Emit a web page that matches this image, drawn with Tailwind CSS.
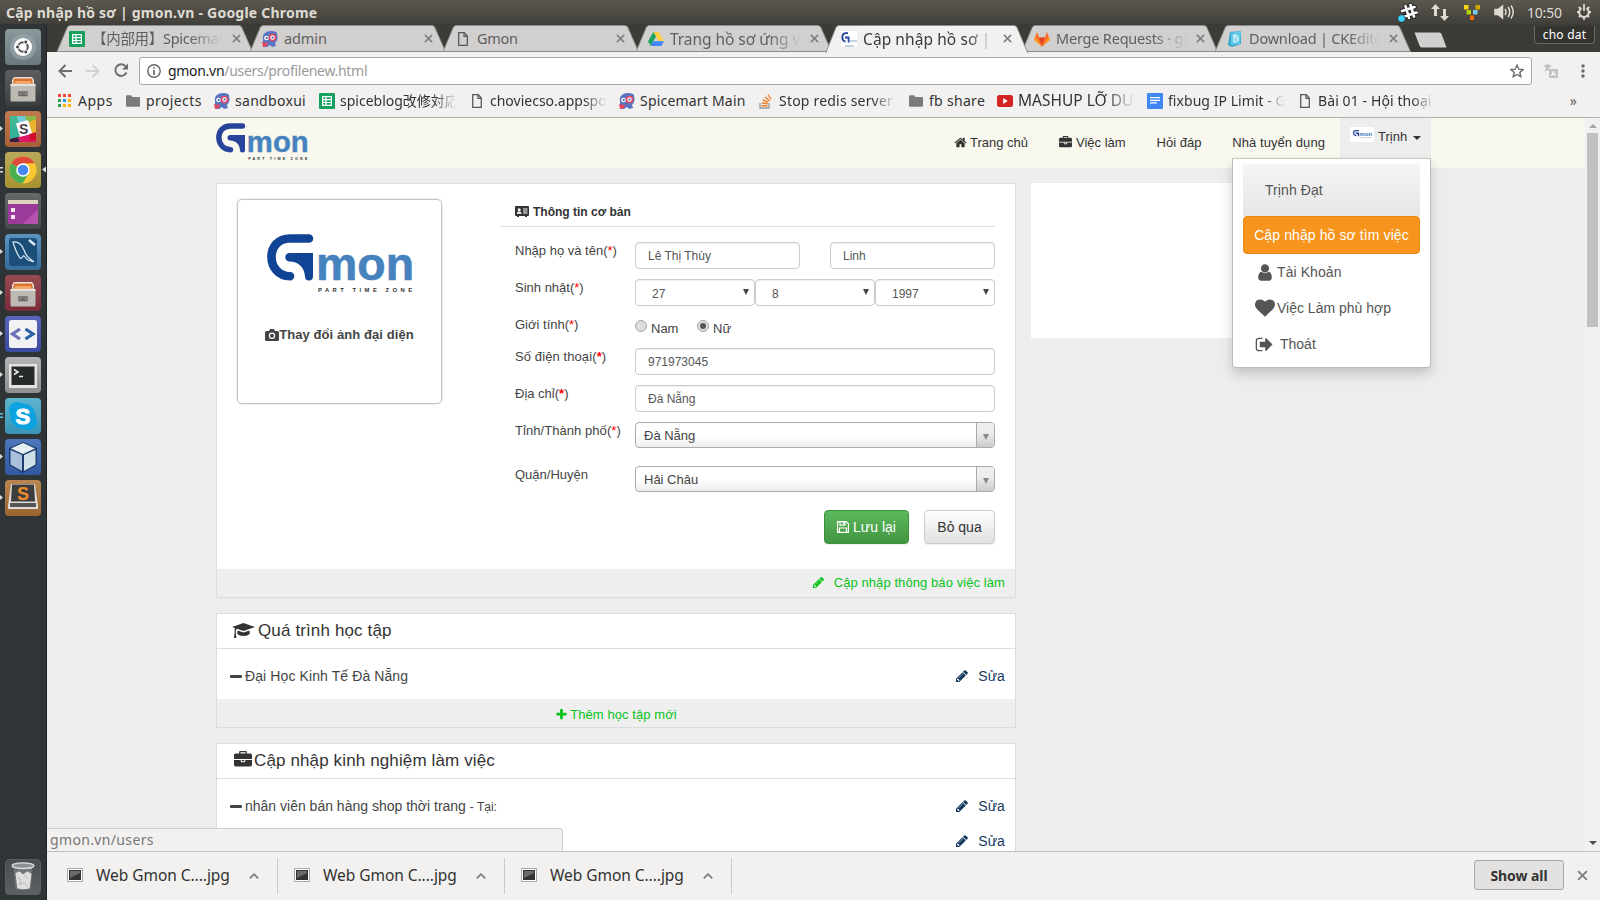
<!DOCTYPE html>
<html lang="vi">
<head>
<meta charset="utf-8">
<title>Cập nhập hồ sơ | gmon.vn</title>
<script src="https://cdn.jsdelivr.net/npm/@tailwindcss/browser@4"></script>
</head>
<body class="w-[1600px] h-[900px] overflow-hidden bg-[#ededed] font-['Liberation_Sans',Arial,sans-serif] text-[13px] text-[#444]">

<svg class="hidden">
  <symbol id="home" viewBox="0 0 1792 1792"><path d="M1472 992v480q0 26-19 45t-45 19h-384v-384h-256v384h-384q-26 0-45-19t-19-45v-480q0-1 .5-3t.5-3l575-474 575 474q1 2 1 6zm223-69l-62 74q-8 9-21 11h-3q-13 0-21-7l-692-577-692 577q-12 8-24 7-13-2-21-11l-62-74q-8-10-7-23.500t11-21.500l719-599q32-26 76-26t76 26l244 204v-195q0-14 9-23t23-9h192q14 0 23 9t9 23v408l219 182q10 8 11 21.500t-7 23.500z"/></symbol>
  <symbol id="briefcase" viewBox="0 0 1792 1792"><path d="M640 256h512v-128h-512v128zm1152 640v480q0 66-47 113t-113 47h-1472q-66 0-113-47t-47-113v-480h672v160q0 26 19 45t45 19h320q26 0 45-19t19-45v-160h672zm-768 0v128h-256v-128h256zm768-480v384h-1792v-384q0-66 47-113t113-47h352v-160q0-40 28-68t68-28h576q40 0 68 28t28 68v160h352q66 0 113 47t47 113z"/></symbol>
  <symbol id="user" viewBox="0 0 1792 1792"><path d="M1536 1399q0 109-62.500 187t-150.500 78h-854q-88 0-150.500-78t-62.500-187q0-85 8.500-160.500t31.500-152 58.500-131 94-89 134.500-34.500q131 128 313 128t313-128q76 0 134.500 34.500t94 89 58.500 131 31.500 152 8.500 160.500zm-256-887q0 159-112.500 271.500t-271.500 112.500-271.500-112.500-112.500-271.500 112.500-271.500 271.500-112.500 271.500 112.500 112.500 271.500z"/></symbol>
  <symbol id="heart" viewBox="0 0 1792 1792"><path d="M896 1664q-26 0-44-18l-624-602q-10-8-27.500-26t-55.500-65.500-68-97.500-53.500-121-23.500-138q0-220 127-344t351-124q62 0 126.500 21.500t120 58 95.500 68.500 76 68q36-36 76-68t95.500-68.500 120-58 126.500-21.500q224 0 351 124t127 344q0 221-229 450l-623 600q-18 18-44 18z"/></symbol>
  <symbol id="signout" viewBox="0 0 1792 1792"><path d="M704 1440q0 4 1 20t.5 26.500-3 23.500-10 19.500-20.500 6.500h-320q-119 0-203.500-84.500t-84.500-203.500v-704q0-119 84.500-203.500t203.500-84.500h320q13 0 22.500 9.500t9.500 22.500q0 4 1 20t.5 26.500-3 23.500-10 19.500-20.500 6.500h-320q-66 0-113 47t-47 113v704q0 66 47 113t113 47h312l11.500 1 11.500 3 8 5.500 7 9 2 13.500zm928-544q0 26-19 45l-544 544q-19 19-45 19t-45-19-19-45v-288h-448q-26 0-45-19t-19-45v-384q0-26 19-45t45-19h448v-288q0-26 19-45t45-19 45 19l544 544q19 19 19 45z"/></symbol>
  <symbol id="pencil" viewBox="0 0 1792 1792"><path d="M491 1536l91-91-235-235-91 91v107h128v128h107zm523-928q0-22-22-22-10 0-17 7l-542 542q-7 7-7 17 0 22 22 22 10 0 17-7l542-542q7-7 7-17zm-54-192l416 416-832 832h-416v-416zm683 96q0 53-37 90l-166 166-416-416 166-165q36-38 90-38 53 0 91 38l235 234q37 39 37 91z"/></symbol>
  <symbol id="plus" viewBox="0 0 1792 1792"><path d="M1600 736v192q0 40-28 68t-68 28h-416v416q0 40-28 68t-68 28h-192q-40 0-68-28t-28-68v-416h-416q-40 0-68-28t-28-68v-192q0-40 28-68t68-28h416v-416q0-40 28-68t68-28h192q40 0 68 28t28 68v416h416q40 0 68 28t28 68z"/></symbol>
  <symbol id="logo" viewBox="0 0 146 60">
    <path d="M42 4.500H23C11 4.500 4.500 13 4.500 23s7 19 18.500 19.200" fill="none" stroke="currentColor" stroke-width="8.600" stroke-linecap="round"/>
    <path d="M22.500 19H46v23.500a4 4 0 0 1-8 0C37.500 33 31 27.500 22.500 27.500a4.200 4.200 0 0 1 0-8.500z" fill="currentColor"/>
    <text x="49" y="45.700" font-family="Liberation Sans" font-weight="bold" font-size="46" textLength="98" lengthAdjust="spacingAndGlyphs" fill="#4682be" stroke="#4682be" stroke-width=".6">mon</text>
    <text x="51" y="57.800" font-family="Liberation Sans" font-weight="bold" font-size="5.800" textLength="94" fill="#333">PART TIME ZONE</text>
  </symbol>
  <symbol id="cabinet" viewBox="0 0 36 36">
    <path d="M7 10 9 7h18l2 3v5H7z" fill="#e9e5dd"/><path d="M9 8.500h18l1 5H8z" fill="#d9702c"/><path d="M10 11h16v3H10z" fill="#f2a66a"/>
    <path d="M5.500 14h25v16.500a1 1 0 0 1-1 1h-23a1 1 0 0 1-1-1z" fill="#bdbab4"/><path d="M5.500 14h25v2h-25z" fill="#e4e2de"/>
    <path d="M14 22h8v3.500h-8z" fill="none" stroke="#666" stroke-width="1.300"/><path d="M15.500 24h5" stroke="#444" stroke-width="1.200"/>
  </symbol>
  <symbol id="sheet" viewBox="0 0 16 16"><rect width="16" height="16" rx="1" fill="#16a05d"/><path d="M3 3h10v10H3z" fill="#fff"/><path d="M4.300 4.300h2v1.800h-2zM7.600 4.300h4.200v1.800H7.600zM4.300 7.200h2v1.700h-2zM7.600 7.200h4.200v1.700H7.600zM4.300 10h2v1.800h-2zM7.600 10h4.200v1.800H7.600z" fill="#16a05d"/></symbol>
  <symbol id="mascot" viewBox="0 0 16 16"><path d="M1 8C0 3 4 0 9 0c3 0 7 1 6 3 1 3 1 6-2 9l1 3-4 1-2-2-3 2-4 0z" fill="#5874c0"/><circle cx="4.500" cy="7" r="2.300" fill="#fff"/><circle cx="10.500" cy="6.500" r="3" fill="#fff" stroke="#e8455f" stroke-width="1.600"/><circle cx="10.500" cy="6.500" r="1" fill="#3b4f9a"/><circle cx="4.700" cy="7" r="1" fill="#3b4f9a"/><path d="M0 11l3 1 3-1-1 4-4 1z" fill="#e8455f"/></symbol>
  <symbol id="page" viewBox="0 0 12 16"><path d="M1.700 1.700h5.600l3 3.300v9.300H1.700z" fill="none" stroke="#5a5a5a" stroke-width="1.300"/><path d="M7 1.500v3.800h3.500" fill="none" stroke="#5a5a5a" stroke-width="1.300"/></symbol>
  <symbol id="folder" viewBox="0 0 14 12"><path d="M0 1.500Q0 .3 1 .3h4l1.500 1.700H13q1 0 1 1v7.700q0 1-1 1H1q-1 0-1-1z" fill="#7b7b7b"/></symbol>
  <symbol id="x" viewBox="0 0 10 10"><path d="M1 1l8 8M9 1L1 9" stroke="#7e7e7e" stroke-width="1.700"/></symbol>
  <symbol id="thumb" viewBox="0 0 16 14"><path d="M.5.5h15v13H.5z" fill="#fff" stroke="#a8a8a8"/><path d="M2 2h12v10H2z" fill="#333"/><path d="M3 3h10v2L3 10z" fill="#6a6a6a"/></symbol>
  <symbol id="chev" viewBox="0 0 10 6"><path d="M.8 5.300 5 1.200l4.200 4.100" fill="none" stroke="#7a7a7a" stroke-width="1.700"/></symbol>
  <symbol id="tab" viewBox="0 0 206 28"><path d="M.5 27.500 11 2.500Q12 .5 14 .5h175q2 0 3 2l11 25z"/></symbol>
</svg>

<!-- system panel -->
<div class="h-6 bg-linear-to-b from-[#5b584e] to-[#403f3a] flex items-center pl-1.5 pr-2 text-[#dfdbd2] font-['Noto_Sans','Open_Sans',sans-serif]">
  <div class="font-bold text-[14px] tracking-[0.22px] whitespace-nowrap">Cập nhập hồ sơ | gmon.vn - Google Chrome</div>
  <div class="ml-auto flex items-center">
    <svg class="w-[21px] h-[21px]" viewBox="0 0 21 21"><g stroke="#222" stroke-width="4.500" stroke-linecap="round"><path d="M8.500 4l3.500 12M13.500 3l3.500 11.500M5 9l12.500-4M7 14.500l12.500-4"/></g><g stroke="#fff" stroke-width="2.600" stroke-linecap="round"><path d="M8.500 4l3.500 12M13.500 3l3.500 11.500M5 9l12.500-4M7 14.500l12.500-4"/></g><circle cx="4.500" cy="16.500" r="3.800" fill="#3fd0f5" stroke="#222" stroke-width=".6"/></svg>
    <svg class="ml-[13px] w-[18px] h-[17px]" viewBox="0 0 18 17" fill="#dfdbd2"><path d="M4.500 0 9 5H6v7H3V5H0zM13.500 17 9 12h3V5h3v7h3z"/></svg>
    <svg class="ml-[15px] w-4 h-[15px]" viewBox="0 0 16 15"><path d="M0 0h4.500v4.500H0z" fill="#fcd116"/><path d="M11.500 0H16v4.500h-4.500z" fill="#d6a200"/><path d="M2.500 5H7v4.500H2.500z" fill="#b0d000"/><path d="M9 5h4.500v4.500H9z" fill="#7ec8e8"/><path d="M6 10.500h4V15H6z" fill="#ff6a00"/></svg>
    <svg class="ml-3.5 w-[21px] h-4" viewBox="0 0 21 16" fill="none" stroke="#dfdbd2" stroke-width="1.500"><path d="M1 5.500h3L8.500 2v12L4 10.500H1z" fill="#dfdbd2"/><path d="M11 5q2 3 0 6M14 3q3.500 5 0 10M17 1.500q4.500 6.500 0 13" /></svg>
    <div class="ml-3 w-[37px] text-[14px] tracking-[-0.2px]">10:50</div>
    <svg class="ml-3 w-4 h-4" viewBox="0 0 16 16" fill="none" stroke="#dfdbd2"><path d="M5.500 4.200a4.800 4.800 0 1 0 5 0" stroke-width="2"/><path d="M8 0v7M1 8h2.500M12.500 8H15M3 13l1.600-1.600M13 13l-1.600-1.600M8 13v3M2.800 3l1.700 1.600M13.200 3l-1.700 1.600" stroke-width="1.800"/></svg>
  </div>
</div>

<div class="flex h-[876px]">
<!-- launcher -->
<div class="w-[47px] shrink-0 bg-[#2f3436] border-r border-[#1f2324] pt-[5px] flex flex-col gap-[5px] relative">
  <div class="ml-[5px] size-9 rounded-[4px] bg-linear-to-b from-[#8a989c] to-[#6c7a80]"><svg viewBox="0 0 36 36"><circle cx="18" cy="18" r="13" fill="#9fabae" opacity=".6"/><circle cx="18" cy="18" r="9" fill="#fff"/><circle cx="18" cy="18" r="4.800" fill="none" stroke="#555" stroke-width="2"/><circle cx="12.500" cy="18" r="2" fill="#444" stroke="#fff"/><circle cx="20.800" cy="13" r="2" fill="#444" stroke="#fff"/><circle cx="20.800" cy="23" r="2" fill="#444" stroke="#fff"/></svg></div>
  <div class="ml-[5px] size-9 rounded-[4px] bg-linear-to-b from-[#5d5f5f] to-[#3b3e3f]"><svg viewBox="0 0 36 36"><use href="#cabinet"/></svg></div>
  <div class="ml-[5px] size-9 rounded-[4px] bg-linear-to-b from-[#c07a50] to-[#a8603a]"><svg viewBox="0 0 36 36"><path d="M5 5h26v26H5z" fill="#fff"/><path d="M5 5h7l3 8-10 4z" fill="#3eb991"/><path d="M12 5h19v3l-16 5z" fill="#70c9db"/><path d="M20 5h11v5l-9 2z" fill="#8ab94a"/><path d="M31 8v13l-6 2-3-11z" fill="#ecb32d"/><path d="M5 16l7-2 4 12-11 3z" fill="#35b39a"/><path d="M31 22v9H15l-2-5z" fill="#e01563"/><path d="M5 28l8-2 2 5H5z" fill="#431a3d"/><path d="M24 23l7-2v7l-5 2z" fill="#d0102b"/><path d="m11 12.500 12-3.500 4 13-12 4z" fill="#fff"/><text x="14" y="23" font-size="14" font-weight="bold" fill="#4d394b" font-family="Liberation Sans">S</text></svg></div>
  <div class="ml-[5px] size-9 rounded-[4px] bg-linear-to-b from-[#b8a95c] to-[#a8912f]"><svg viewBox="0 0 36 36"><circle cx="18" cy="18" r="13.500" fill="#f9c732"/><path d="M18 18 6.300 11.200A13.500 13.500 0 0 1 29.700 11.200H18z" fill="#e04a3a"/><path d="M6.300 11.200A13.500 13.500 0 0 0 17.500 31.500l6-10L18 18z" fill="#4aaf50"/><circle cx="18" cy="18" r="6.800" fill="#fff"/><circle cx="18" cy="18" r="5.300" fill="#4688f1"/></svg></div>
  <div class="ml-[5px] size-9 rounded-[4px] bg-linear-to-b from-[#66696a] to-[#464a4b]"><svg viewBox="0 0 36 36"><path d="M3 7h30v24H3z" fill="#9b3a9a"/><path d="M18 31 33 16v15z" fill="#b652ae"/><path d="M3 7h30v4H3z" fill="#ddd3bd"/><path d="M6 15h4v4H6zM6 22h4v4H6z" fill="#f4e6f4"/></svg></div>
  <div class="ml-[5px] size-9 rounded-[4px] bg-linear-to-b from-[#5b92c0] to-[#356d9d]"><svg viewBox="0 0 36 36"><rect x="4" y="4" width="28" height="28" rx="3" fill="#1b4f7a"/><path d="M8 8c5-1 9 3 11 8 1 4 3 6 5 8l5 4-6-2c-3-2-3-5-5-4-1 2-2 3-3 2-3-4-5-9-7-16z" fill="none" stroke="#dce9f4" stroke-width="1.200"/><path d="m24 6 6 5" stroke="#dce9f4" stroke-width="2.500"/></svg></div>
  <div class="ml-[5px] size-9 rounded-[4px] bg-linear-to-b from-[#964a54] to-[#7a2c38]"><svg viewBox="0 0 36 36"><use href="#cabinet"/></svg></div>
  <div class="ml-[5px] size-9 rounded-[4px] bg-linear-to-b from-[#5a66bb] to-[#3a4aa0]"><svg viewBox="0 0 36 36"><rect x="4" y="4" width="28" height="28" rx="2.500" fill="#f2f2f4"/><path d="m15 13-7.500 5 7.500 5" fill="none" stroke="#6f6fb8" stroke-width="3.300"/><path d="m20.500 13 7.500 5-7.500 5" fill="none" stroke="#2d62a8" stroke-width="3.300"/></svg></div>
  <div class="ml-[5px] size-9 rounded-[4px] bg-linear-to-b from-[#b3b3b3] to-[#8f8f8f]"><svg viewBox="0 0 36 36"><path d="M4 7h28v24H4z" fill="#e2e2e2"/><path d="M6.500 9.500h23v18.500h-23z" fill="#262a28"/><path d="m9 12.500 4 2.500-4 2.500M14 19.500h4" fill="none" stroke="#eee" stroke-width="1.500"/></svg></div>
  <div class="ml-[5px] size-9 rounded-[4px] bg-linear-to-b from-[#5fb4cf] to-[#3893b5]"><svg viewBox="0 0 36 36"><circle cx="12" cy="12" r="8" fill="#0da2e0"/><circle cx="24" cy="24" r="8" fill="#0da2e0"/><circle cx="18" cy="18" r="12.500" fill="#0da2e0"/><text x="10.500" y="26" font-size="22" font-weight="bold" fill="#fff" stroke="#fff" font-family="Liberation Sans">S</text></svg></div>
  <div class="ml-[5px] size-9 rounded-[4px] bg-linear-to-b from-[#4e78ba] to-[#3358a0]"><svg viewBox="0 0 36 36"><path d="m18 3 14 6v17l-14 8-14-8V9z" fill="#1f3c70"/><path d="m18 4 12 5.500-12 5.500L6 9.500z" fill="#e6f0f2"/><path d="m5.500 11 11.500 5v16l-11.500-6.500z" fill="#a9c0dc"/><path d="m30.500 11-11.500 5v16l11.500-6.500z" fill="#cfe0ea"/></svg></div>
  <div class="ml-[5px] size-9 rounded-[4px] bg-linear-to-b from-[#b98550] to-[#9a6630]"><svg viewBox="0 0 36 36"><path d="M6 4h24l3 22v3H3v-3z" fill="#e0dedb"/><path d="M7 4.500h22l1 17H6z" fill="#3d3d3d"/><path d="M5 23h26v4H5z" fill="#555"/><text x="12" y="19.500" font-size="18" font-weight="bold" fill="#f08b2c" font-family="Liberation Sans">S</text></svg></div>
  <div class="ml-[5px] mt-auto mb-[5px] size-9 rounded-[4px] bg-linear-to-b from-[#4a4e50] to-[#5c6062] border border-[#5a5e60]"><svg viewBox="0 0 36 36"><path d="M8 7h20l-2 24q-8 2-16 0z" fill="#707476"/><path d="M10 14l4-2 4 3 5-3 4 3-2 15q-7 2-13 0z" fill="#dededc"/><path d="m12 18 4 3-2 5 5-2 4 4M19 15l4 5" stroke="#b5b5b5" fill="none"/><ellipse cx="18" cy="6" rx="11.500" ry="3" fill="#8e9294" stroke="#dcdcdc" stroke-width="1.500"/></svg></div>
  <!-- running indicators -->
  <svg class="absolute left-0 top-0 w-[47px] h-[500px]" viewBox="0 0 47 500"><g fill="#dcdcdc"><path d="M0 102l3 2.500-3 2.500zM0 225l3 2.500-3 2.500zM0 266l3 2.500-3 2.500zM0 307l3 2.500-3 2.500zM0 348l3 2.500-3 2.500zM0 430l3 2.500-3 2.500zM0 471l3 2.500-3 2.500zM0 143h3v1.500H0zM0 147h3v1.500H0zM46 142.500l-4 3 4 3z"/></g><path d="M0 389h3v1.500H0zM0 392.500h3v1.500H0z" fill="#5cc4ec"/></svg>
</div>

<!-- browser -->
<div class="w-[1553px] flex flex-col font-['Noto_Sans','Noto_Sans_CJK_JP',sans-serif]">
  <!-- tab strip -->
  <div class="h-[28px] bg-[#3c3b37] flex pl-1.5 pt-px relative text-[14.500px] text-[#5f5f5f] whitespace-nowrap">
    <div class="w-[193px] flex items-center relative"><svg class="absolute left-0 top-0 w-[206px] h-[27px] fill-[#d2d0cf] stroke-[#8f8d8b]"><use href="#tab"/></svg>
      <svg class="relative ml-4 size-4"><use href="#sheet"/></svg><span class="relative ml-[7px] w-[130px] overflow-hidden tracking-[-0.3px] [mask-image:linear-gradient(to_right,#000_75%,transparent)]">【内部用】Spicemart</span><svg class="relative ml-2.5 size-[9px]"><use href="#x"/></svg></div>
    <div class="w-[193px] flex items-center relative"><svg class="absolute left-0 top-0 w-[206px] h-[27px] fill-[#d2d0cf] stroke-[#8f8d8b]"><use href="#tab"/></svg>
      <svg class="relative ml-4 size-4"><use href="#mascot"/></svg><span class="relative ml-1.5 w-[131px] tracking-[-0.1px]">admin</span><svg class="relative ml-[9px] size-[9px]"><use href="#x"/></svg></div>
    <div class="w-[193px] flex items-center relative"><svg class="absolute left-0 top-0 w-[206px] h-[27px] fill-[#d2d0cf] stroke-[#8f8d8b]"><use href="#tab"/></svg>
      <svg class="relative ml-[18px] w-3 h-4"><use href="#page"/></svg><span class="relative ml-2 w-[131px] tracking-[-0.3px]">Gmon</span><svg class="relative ml-[8px] size-[9px]"><use href="#x"/></svg></div>
    <div class="w-[193px] flex items-center relative"><svg class="absolute left-0 top-0 w-[206px] h-[27px] fill-[#d2d0cf] stroke-[#8f8d8b]"><use href="#tab"/></svg>
      <svg class="relative ml-4 size-4" viewBox="0 0 16 16"><path d="M5.300 1h5.400L16 10h-5.400z" fill="#ffcd40"/><path d="M5.300 1 8 5.500 2.700 15 0 10.300z" fill="#1da462"/><path d="M5.300 10.300H16L13.300 15H2.700z" fill="#4387fd"/></svg><span class="relative ml-1.5 w-[131px] overflow-hidden text-[15.500px] leading-[22px] tracking-[-0.05px] [mask-image:linear-gradient(to_right,#000_75%,transparent)]">Trang hồ sơ ứng viên</span><svg class="relative ml-[9px] size-[9px]"><use href="#x"/></svg></div>
    <div class="w-[193px] flex items-center relative z-10 text-[#3a3a3a]"><svg class="absolute left-0 top-0 w-[206px] h-[28px] fill-[#f2f1f0] stroke-[#8f8d8b]" viewBox="0 0 206 28"><path d="M.5 28.500 11 2.500Q12 .5 14 .5h175q2 0 3 2l11 26"/></svg>
      <svg class="relative ml-4 size-4 bg-white text-[#27439b]" viewBox="0 0 16 16"><path d="M7 2.200H4.500q-3.200.5-3.200 4t3.200 4.500" fill="none" stroke="currentColor" stroke-width="1.800"/><path d="M4 5.500h4.500v6H6.700V7.500H4z" fill="currentColor"/><path d="M9 10h7M4 15h9" stroke="#8fa7c8"/></svg><span class="relative ml-1.5 w-[131px] overflow-hidden text-[15.500px] leading-[22px] tracking-[0.08px] [mask-image:linear-gradient(to_right,#000_80%,transparent)]">Cập nhập hồ sơ | gmon</span><svg class="relative ml-[9px] size-[9px]"><use href="#x"/></svg></div>
    <div class="w-[193px] flex items-center relative"><svg class="absolute left-0 top-0 w-[206px] h-[27px] fill-[#d2d0cf] stroke-[#8f8d8b]"><use href="#tab"/></svg>
      <svg class="relative ml-4 size-4" viewBox="0 0 16 16"><path d="M0 9 3 1l2.200 5.500h5.600L13 1l3 8-8 6.500z" fill="#fc6d26"/><path d="M5.200 6.500h5.600L8 15.500z" fill="#e24329"/><path d="M0 9l1-3 7 9.500zM16 9l-1-3-7 9.500z" fill="#fca326"/></svg><span class="relative ml-1.5 w-[131px] overflow-hidden tracking-[-0.2px] [mask-image:linear-gradient(to_right,#000_75%,transparent)]">Merge Requests · gmon</span><svg class="relative ml-[9px] size-[9px]"><use href="#x"/></svg></div>
    <div class="w-[193px] flex items-center relative"><svg class="absolute left-0 top-0 w-[206px] h-[27px] fill-[#d2d0cf] stroke-[#8f8d8b]"><use href="#tab"/></svg>
      <svg class="relative ml-4 size-4" viewBox="0 0 16 16"><path d="m3 1 11-1 0 13-9 3-4-2z" fill="#32a7cf"/><path d="M4 2l10-2-1 13-9 1z" fill="#62c9e6"/><path d="M7 4q5 0 4 4t-4 3zM7 4l4 6" fill="none" stroke="#fff"/></svg><span class="relative ml-1.5 w-[131px] overflow-hidden tracking-[-0.2px] [mask-image:linear-gradient(to_right,#000_75%,transparent)]">Download | CKEditor</span><svg class="relative ml-[9px] size-[9px]"><use href="#x"/></svg></div>
    <svg class="ml-[10px] mt-[7px] w-[33px] h-4" viewBox="0 0 33 16"><path d="M.5.5h25q1.500 0 2 1.500l5 13.500H8q-2 0-2.500-2z" fill="#d2d0cf"/></svg>
    <div class="absolute right-[5px] top-[2px] w-[61px] h-[18px] border border-t-0 border-[#6a6964] rounded-b-[4px] bg-[#34332f] text-white text-[12px] leading-[18px] text-center tracking-[0.2px]">cho dat</div>
  </div>
  <!-- toolbar -->
  <div class="h-[36px] bg-[#f2f1f0] flex items-center pl-[11px] pt-px">
    <svg class="w-3.5 h-3.5" viewBox="0 0 14 14" fill="none" stroke="#6e6e6e" stroke-width="2"><path d="M14 7H1.500M7.500 1 1.500 7l6 6"/></svg>
    <svg class="ml-3.5 w-3.5 h-3.5" viewBox="0 0 14 14" fill="none" stroke="#d2d1d0" stroke-width="2"><path d="M0 7h12.500M6.500 1l6 6-6 6"/></svg>
    <svg class="ml-3.5 w-[15px] h-[15px]" viewBox="0 0 15 15"><path d="M12.500 9.500A5.800 5.800 0 1 1 11.800 3.500" fill="none" stroke="#6e6e6e" stroke-width="2"/><path d="M14 .5v6H8z" fill="#6e6e6e"/></svg>
    <div class="ml-[10px] w-[1393px] h-7 bg-white border border-[#a9a8a6] rounded-[3px] flex items-center pl-[7px] pr-[7px]">
      <svg class="size-3.5" viewBox="0 0 14 14"><circle cx="7" cy="7" r="6.200" fill="none" stroke="#666" stroke-width="1.400"/><path d="M7 6v5M7 3.200v1.600" stroke="#666" stroke-width="1.700"/></svg>
      <span class="ml-[7px] text-[14px] tracking-[-0.3px] text-[#9a9a9a]"><span class="text-[#222]">gmon.vn</span>/users/profilenew.html</span>
      <svg class="ml-auto size-[14px]" viewBox="0 0 14 14"><path d="m7 1.200 1.800 4 4.200.4-3.200 2.900 1 4.200L7 10.500l-3.800 2.200 1-4.200L1 5.600l4.200-.4z" fill="none" stroke="#6a6a6a" stroke-width="1.400"/></svg>
    </div>
    <svg class="ml-3 size-[14px]" viewBox="0 0 14 14"><path d="M0 2h7M3.500 0v2M1 7l5-5M2 3l4 4" stroke="#bbb" stroke-width="1.300"/><path d="M5 5h9v9H5z" fill="#c4c4c4"/><path d="m7.500 12 2-5 2 5M8 10.500h3" fill="none" stroke="#fff"/></svg>
    <svg class="ml-[23px] w-1 h-3.5" viewBox="0 0 4 14" fill="#6b6b6b"><circle cx="2" cy="2" r="1.700"/><circle cx="2" cy="7" r="1.700"/><circle cx="2" cy="12" r="1.700"/></svg>
  </div>
  <!-- bookmarks -->
  <div class="h-[30px] bg-[#f2f1f0] border-b border-[#b3b2b1] flex items-center pl-[11px] pb-[4px] text-[14px] text-[#333] whitespace-nowrap">
    <svg class="size-[13px]" viewBox="0 0 13 13"><path d="M0 0h3v3H0zM5 0h3v3H5zM10 0h3v3h-3z" fill="#f44336"/><path d="M0 5h3v3H0z" fill="#2e9e5b"/><path d="M5 5h3v3H5z" fill="#2196f3"/><path d="M10 5h3v3h-3zM10 10h3v3h-3zM5 10h3v3H5z" fill="#ffb300"/><path d="M0 10h3v3H0z" fill="#2e9e5b"/></svg>
    <span class="ml-[7px] w-[48px] tracking-[0.5px]">Apps</span>
    <svg class="w-3.5 h-3"><use href="#folder"/></svg><span class="ml-[6px] w-[68px] tracking-[0.4px]">projects</span>
    <svg class="size-4"><use href="#mascot"/></svg><span class="ml-[5px] w-[84px] tracking-[0.3px]">sandboxui</span>
    <svg class="size-4"><use href="#sheet"/></svg><span class="ml-[5px] w-[117px] overflow-hidden [mask-image:linear-gradient(to_right,#000_80%,transparent)]">spiceblog改修対応</span>
    <svg class="ml-[14px] w-3 h-4"><use href="#page"/></svg><span class="ml-[7px] w-[117px] overflow-hidden [mask-image:linear-gradient(to_right,#000_80%,transparent)]">choviecso.appspot</span>
    <svg class="ml-[12px] size-4"><use href="#mascot"/></svg><span class="ml-[5px] w-[119px] tracking-[0.2px]">Spicemart Main</span>
    <svg class="w-3.5 h-4" viewBox="0 0 14 16"><path d="M1 10v5h9v-5" fill="none" stroke="#999" stroke-width="1.300"/><path d="M2.500 12.800h6M2.800 10l6 .8M3.800 7l5.500 2.200M6 4l4.500 4M9 1.500l3 5" stroke="#f08030" stroke-width="1.400"/></svg><span class="ml-[6px] w-[117px] overflow-hidden tracking-[0.2px] [mask-image:linear-gradient(to_right,#000_80%,transparent)]">Stop redis server</span>
    <svg class="ml-[13px] w-3.5 h-3"><use href="#folder"/></svg><span class="ml-[6px] w-[68px] tracking-[0.3px]">fb share</span>
    <svg class="w-4 h-3" viewBox="0 0 16 12"><rect width="16" height="12" rx="2.500" fill="#d32323"/><path d="m6.200 3 4.600 3-4.600 3z" fill="#fff"/></svg><span class="ml-[5px] w-[117px] overflow-hidden text-[15.500px] [mask-image:linear-gradient(to_right,#000_75%,transparent)]">MASHUP LỠ DUYÊN</span>
    <svg class="ml-[12px] size-4" viewBox="0 0 16 16"><rect width="16" height="16" rx="1" fill="#4285f4"/><path d="M3 4.700h10M3 7.300h10M3 9.900h7" stroke="#fff" stroke-width="1.300"/></svg><span class="ml-[5px] w-[117px] overflow-hidden tracking-[0.05px] [mask-image:linear-gradient(to_right,#000_80%,transparent)]">fixbug IP Limit - Google</span>
    <svg class="ml-[14px] w-3 h-4"><use href="#page"/></svg><span class="ml-[7px] w-[117px] overflow-hidden tracking-[0.1px] [mask-image:linear-gradient(to_right,#000_80%,transparent)]">Bài 01 - Hội thoại</span>
    <span class="ml-auto mr-[23px] text-[#666]">»</span>
  </div>

  <!-- page -->
  <div class="h-[733px] flex relative font-['Liberation_Sans',Arial,sans-serif] overflow-hidden">
    <div class="w-[1538px] bg-[#ededed] h-full overflow-hidden">
      <div class="h-[50px] bg-[#f8f8ee] pl-[169px] flex text-[#333]">
        <svg class="mt-[5px] w-[92px] h-[38px] text-[#27439b]"><use href="#logo"/></svg>
        <div class="ml-[646px] w-[371px] flex h-[49px] items-center justify-between whitespace-nowrap">
          <span class="flex items-center"><svg class="mr-[3px] size-[13px] fill-current"><use href="#home"/></svg>Trang chủ</span>
          <span class="flex items-center"><svg class="mr-[4px] size-[13px] fill-current"><use href="#briefcase"/></svg>Việc làm</span>
          <span>Hỏi đáp</span>
          <span class="tracking-[0.06px]">Nhà tuyển dụng</span>
        </div>
        <div class="ml-[15px] w-[91px] h-10 bg-[#ededed] flex items-center pl-[10px] pb-[3px]">
          <div class="w-6 h-[15px] bg-white flex justify-center pt-[3px] mb-[5px]"><svg class="w-[19px] h-2 text-[#27439b]"><use href="#logo"/></svg></div>
          <span class="ml-1">Trịnh</span>
          <span class="ml-[6px] mt-[2px] border-x-4 border-t-4 border-x-transparent border-t-[#333]"></span>
        </div>
      </div>

      <div class="pl-[169px] pt-[15px] flex items-start">
        <div class="w-[800px]">
          <div class="h-[415px] bg-white border border-[#dcdcdc] flex flex-col">
            <div class="h-[385px] flex pl-5 pt-[15px]">
              <div class="w-[205px] h-[205px] border border-[#c4c4c4] rounded-[5px] shadow-[0_0_2px_#ccc] flex flex-col items-center pt-[34px]">
                <svg class="w-[146px] h-[60px] text-[#124496]"><use href="#logo"/></svg>
                <div class="mt-[31px] flex items-center font-bold text-[#444] tracking-[0.08px]"><svg class="w-[14px] h-3" viewBox="0 0 14 12"><path fill-rule="evenodd" fill="#444" d="M1.500 2H4l.8-1.500Q5 0 5.500 0h3q.5 0 .7.500L10 2h2.500Q14 2 14 3.500v7q0 1.500-1.500 1.500h-11Q0 12 0 10.500v-7Q0 2 1.500 2zM7 3.600a3.200 3.200 0 1 0 0 6.400 3.200 3.200 0 0 0 0-6.400zm0 1.200a2 2 0 1 1 0 4 2 2 0 0 1 0-4z"/></svg>Thay đổi ảnh đại diện</div>
              </div>
              <div class="ml-[58px] w-[495px]">
                <div class="h-[28px] border-b border-[#ddd] pl-[15px] pb-[2px] flex items-center font-bold text-[12px] text-[#333]"><svg class="mr-[4px] w-[14px] h-[11px]" viewBox="0 0 14 11"><path d="M1 0h12q1 0 1 1v8q0 1-1 1h-1v1h-2v-1H4v1H2v-1H1q-1 0-1-1V1q0-1 1-1z" fill="#333"/><circle cx="4.200" cy="3.700" r="1.500" fill="#fff"/><path d="M1.700 7.800q0-2.300 2.500-2.300t2.500 2.300zM8 2.500h4.500v1H8zM8 4.500h4.500v1H8zM8 6.500h4.500v1H8z" fill="#fff"/></svg><span class="pt-px">Thông tin cơ bản</span></div>
                <div class="mt-[15px] h-[37px] flex pl-[15px]"><span class="w-[120px] leading-[18px]">Nhập họ và tên(<span class="text-[red]">*</span>)</span><div class="w-[165px] h-[27px] border border-[#ccc] rounded-[4px] shadow-[inset_0_1px_1px_rgba(0,0,0,.075)] pl-3 leading-[27px] text-[12px] text-[#555]">Lê Thị Thùy</div><div class="ml-[30px] w-[165px] h-[27px] border border-[#ccc] rounded-[4px] shadow-[inset_0_1px_1px_rgba(0,0,0,.075)] pl-3 leading-[27px] text-[12px] text-[#555]">Linh</div></div>
                <div class="h-[37px] flex pl-[15px] text-[#444]"><span class="w-[120px] leading-[18px]">Sinh nhật(<span class="text-[red]">*</span>)</span>
                  <div class="w-[120px] h-[27px] border border-[#ccc] rounded-[4px] shadow-[inset_0_1px_1px_rgba(0,0,0,.075)] pl-4 pr-[5px] flex justify-between text-[12px] text-[#555] leading-[28px]">27<span class="mt-[9px] h-0 border-x-[3px] border-t-[6px] border-x-transparent border-t-[#444]"></span></div>
                  <div class="w-[120px] h-[27px] border border-[#ccc] rounded-[4px] shadow-[inset_0_1px_1px_rgba(0,0,0,.075)] pl-4 pr-[5px] flex justify-between text-[12px] text-[#555] leading-[28px]">8<span class="mt-[9px] h-0 border-x-[3px] border-t-[6px] border-x-transparent border-t-[#444]"></span></div>
                  <div class="w-[120px] h-[27px] border border-[#ccc] rounded-[4px] shadow-[inset_0_1px_1px_rgba(0,0,0,.075)] pl-4 pr-[5px] flex justify-between text-[12px] text-[#555] leading-[28px]">1997<span class="mt-[9px] h-0 border-x-[3px] border-t-[6px] border-x-transparent border-t-[#444]"></span></div></div>
                <div class="h-[32px] flex pl-[15px]"><span class="w-[120px] leading-[18px]">Giới tính(<span class="text-[red]">*</span>)</span>
                  <span class="mt-1 size-3 rounded-full border border-[#a5a5a5] bg-[#dedede]"></span><span class="ml-1 w-[46px] leading-[25px]">Nam</span>
                  <span class="mt-1 size-3 rounded-full border border-[#a5a5a5] bg-[#dedede] flex items-center justify-center"><span class="size-1.5 rounded-full bg-[#555]"></span></span><span class="ml-1 leading-[25px]">Nữ</span></div>
                <div class="h-[37px] flex pl-[15px]"><span class="w-[120px] leading-[18px] tracking-[0.1px]">Số điện thoại(<b class="text-[red]">*</b>)</span><div class="w-[360px] h-[27px] border border-[#ccc] rounded-[4px] shadow-[inset_0_1px_1px_rgba(0,0,0,.075)] pl-3 leading-[27px] text-[12px] text-[#555]">971973045</div></div>
                <div class="h-[37px] flex pl-[15px]"><span class="w-[120px] leading-[18px]">Địa chỉ(<b class="text-[red]">*</b>)</span><div class="w-[360px] h-[27px] border border-[#ccc] rounded-[4px] shadow-[inset_0_1px_1px_rgba(0,0,0,.075)] pl-3 leading-[27px] text-[12px] text-[#555]">Đà Nẵng</div></div>
                <div class="h-[44px] flex pl-[15px]"><span class="w-[120px] leading-[18px] tracking-[0.06px]">Tỉnh/Thành phố(<span class="text-[red]">*</span>)</span><div class="w-[360px] h-[26px] border border-[#aaa] rounded-[4px] bg-linear-to-t from-[#eee] to-white to-50% pl-2 leading-[25px] flex justify-between overflow-hidden">Đà Nẵng<span class="w-[18px] border-l border-[#aaa] bg-linear-to-t from-[#ccc] to-[#eee] to-60% flex justify-center pt-[11px]"><span class="h-0 border-x-[3px] border-t-[6px] border-x-transparent border-t-[#888]"></span></span></div></div>
                <div class="h-[44px] flex pl-[15px]"><span class="w-[120px] leading-[18px]">Quận/Huyện</span><div class="w-[360px] h-[26px] border border-[#aaa] rounded-[4px] bg-linear-to-t from-[#eee] to-white to-50% pl-2 leading-[25px] flex justify-between overflow-hidden">Hải Châu<span class="w-[18px] border-l border-[#aaa] bg-linear-to-t from-[#ccc] to-[#eee] to-60% flex justify-center pt-[11px]"><span class="h-0 border-x-[3px] border-t-[6px] border-x-transparent border-t-[#888]"></span></span></div></div>
                <div class="flex justify-end gap-[15px] text-[14px]">
                  <div class="w-[85px] h-[34px] rounded-[4px] border border-[#3e8f3e] bg-linear-to-b from-[#5cb85c] to-[#419641] text-white flex items-center justify-center gap-1 shadow-[0_1px_1px_rgba(0,0,0,.075)]"><svg class="size-3" viewBox="0 0 12 12" fill="none" stroke="#fff" stroke-width="1.200"><path d="M.6.6h8.600l2.200 2.200v8.600H.6zM3 .6v3.600h5V.6M2.500 11.400V7h7v4.400M6.500 1v2"/></svg>Lưu lại</div>
                  <div class="w-[71px] h-[34px] rounded-[4px] border border-[#ccc] bg-linear-to-b from-white to-[#e0e0e0] text-[#333] flex items-center justify-center shadow-[0_1px_1px_rgba(0,0,0,.075)]">Bỏ qua</div>
                </div>
              </div>
            </div>
            <div class="flex-1 bg-[#efefef] flex items-center justify-end pr-[10px] pb-px text-[#08c31c] tracking-[0.08px]"><svg class="mr-[9px] size-[13px] fill-current"><use href="#pencil"/></svg>Cập nhập thông báo việc làm</div>
          </div>

          <div class="mt-[15px] h-[115px] bg-white border border-[#dcdcdc] flex flex-col">
            <div class="h-[35px] border-b border-[#ddd] pl-[15px] flex items-center text-[17px] tracking-[0.13px] text-[#333]"><svg class="mr-[3px] mb-0.5 w-[23px] h-[15px]" viewBox="0 0 23 15" fill="#333"><path d="M11.500 0 23 4 11.500 8 5 5.700 3.800 7.200V10l.6 5H2l.6-5V6.500L3 5 0 4z"/><path d="M5.500 7.500l6 2 6-2 .3 3.200q-2 2.300-6.300 2.300t-6.300-2.300z"/></svg>Quá trình học tập</div>
            <div class="h-[50px] flex items-center pl-[13px] pr-[10px] pt-1 text-[14px] tracking-[0.1px]"><span class="w-3 h-[3px] rounded-[1px] bg-[#444] mr-[3px]"></span>Đại Học Kinh Tế Đà Nẵng<span class="ml-auto flex items-center text-[#143a5f]"><svg class="mr-[9px] size-[14px] fill-current"><use href="#pencil"/></svg>Sửa</span></div>
            <div class="flex-1 bg-[#efefef] flex items-center justify-center pt-[3px] text-[#08c31c] tracking-[0.08px]"><svg class="mr-[2px] size-[13px] fill-current"><use href="#plus"/></svg>Thêm học tập mới</div>
          </div>

          <div class="mt-[15px] h-[180px] bg-white border border-[#dcdcdc]">
            <div class="h-[35px] border-b border-[#ddd] pl-[17px] flex items-center text-[17px] tracking-[0.13px] text-[#333]"><svg class="mr-0.5 mb-0.5 size-[18px] fill-current"><use href="#briefcase"/></svg>Cập nhập kinh nghiệm làm việc</div>
            <div class="h-[50px] flex items-center pl-[13px] pr-[10px] pt-1 text-[14px]"><span class="w-3 h-[3px] rounded-[1px] bg-[#444] mr-[3px]"></span>nhân viên bán hàng shop thời trang&nbsp;<span class="text-[12px] mt-[2px]">- Tại:</span><span class="ml-auto flex items-center text-[#143a5f] tracking-[0.1px]"><svg class="mr-[9px] size-[14px] fill-current"><use href="#pencil"/></svg>Sửa</span></div>
            <div class="h-[24px] flex items-center justify-end pr-[10px] text-[14px] text-[#143a5f] tracking-[0.1px]"><svg class="mr-[9px] size-[14px] fill-current"><use href="#pencil"/></svg>Sửa</div>
          </div>
        </div>
        <div class="ml-[15px] w-[300px] h-[155px] bg-white"></div>
      </div>
    </div>
    <!-- scrollbar -->
    <div class="w-[15px] bg-[#f1f1f1] flex flex-col items-center pt-1.5 pb-[6px]">
      <span class="border-x-4 border-b-4 border-x-transparent border-b-[#a3a3a3]"></span>
      <span class="mt-[5px] w-[11px] h-[194px] bg-[#c1c1c1]"></span>
      <span class="mt-auto border-x-4 border-t-4 border-x-transparent border-t-[#505050]"></span>
    </div>
    <!-- account menu -->
    <div class="absolute left-[1185px] top-10 w-[199px] h-[210px] bg-white border border-[#bbb] border-t-[#c9c9bb] rounded-b-[4px] shadow-[0_6px_12px_rgba(0,0,0,.175)] px-[10px] pt-[5px] text-[14px] text-[#555]">
      <div class="h-[52px] bg-linear-to-b from-[#f5f5f5] to-[#e6e6e6] pl-[22px] flex items-center tracking-[0.08px]">Trịnh Đạt</div>
      <div class="h-[38px] bg-[#f7941d] border border-[#ee8a12] rounded-[4px] text-white flex items-center justify-center whitespace-nowrap tracking-[0.1px]">Cập nhập hồ sơ tìm việc</div>
      <div class="h-9 pl-[12px] flex items-center"><svg class="w-[20px] h-[19px] fill-current"><use href="#user"/></svg><span class="ml-[2px] tracking-[0.08px]">Tài Khoản</span></div>
      <div class="h-9 pl-[12px] flex items-center"><svg class="size-[20px] fill-current"><use href="#heart"/></svg><span class="ml-[2px]">Việc Làm phù hợp</span></div>
      <div class="h-9 pl-[12px] flex items-center"><svg class="w-[19px] h-[19px] fill-current"><use href="#signout"/></svg><span class="ml-[6px]">Thoát</span></div>
    </div>
    <!-- link target bubble -->
    <div class="absolute left-0 bottom-0 w-[516px] h-[23px] bg-[#f2f1f0] border-t border-r border-[#cfcecd] rounded-tr-[4px] pl-[3px] leading-[22px] text-[14px] tracking-[0.35px] text-[#777] font-['Noto_Sans',sans-serif]">gmon.vn/users</div>
  </div>

  <!-- downloads -->
  <div class="h-[49px] bg-[#f2f1ef] border-t border-[#c2c1c0] flex items-center text-[15.500px] tracking-[-0.05px] text-[#333] whitespace-nowrap">
    <div class="w-[231px] h-9 border-r border-[#cbcac9] flex items-center pl-5"><svg class="w-4 h-3.5 mb-[3px]"><use href="#thumb"/></svg><span class="ml-[13px] w-[137px]">Web Gmon C....jpg</span><svg class="ml-4 w-2.5 h-1.5"><use href="#chev"/></svg></div>
    <div class="w-[227px] h-9 border-r border-[#cbcac9] flex items-center pl-4"><svg class="w-4 h-3.5 mb-[3px]"><use href="#thumb"/></svg><span class="ml-[13px] w-[137px]">Web Gmon C....jpg</span><svg class="ml-4 w-2.5 h-1.5"><use href="#chev"/></svg></div>
    <div class="w-[227px] h-9 border-r border-[#cbcac9] flex items-center pl-4"><svg class="w-4 h-3.5 mb-[3px]"><use href="#thumb"/></svg><span class="ml-[13px] w-[137px]">Web Gmon C....jpg</span><svg class="ml-4 w-2.5 h-1.5"><use href="#chev"/></svg></div>
    <div class="ml-auto w-[90px] h-[30px] mb-0.5 border border-[#a9a8a6] rounded-[3px] bg-[#e2e1df] flex items-center justify-center text-[14px] font-bold">Show all</div>
    <svg class="ml-[13px] mr-[12px] mb-0.5 size-[11px]"><use href="#x"/></svg>
  </div>
</div>
</div>
</body>
</html>
